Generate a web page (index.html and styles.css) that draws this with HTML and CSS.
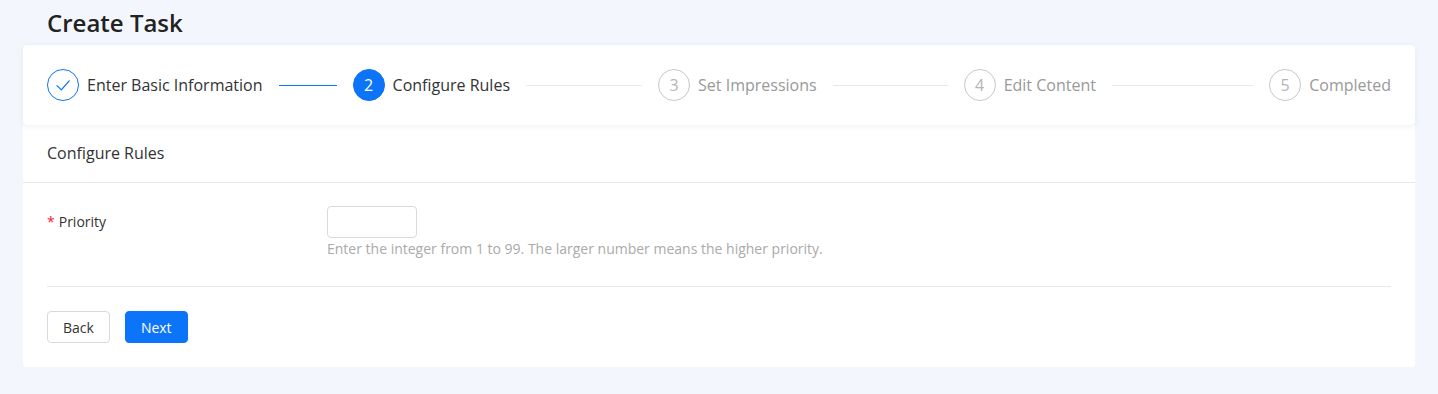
FILE: index.html
```html
<!DOCTYPE html>
<html lang="en">
<head>
    <meta charset="UTF-8">
    <title>Create Task</title>
    <link rel="stylesheet" href="styles.css">
</head>
<body>
<div class="page">
    <h1 class="page-title">Create Task</h1>

    <div class="steps-card">
        <div class="steps">
            <div class="step finish">
                <span class="step-icon">
                    <svg width="18" height="18" viewBox="0 0 18 18"><path d="M3 9.6l4.3 4.3 7.9-9" fill="none" stroke="#0c74f9" stroke-width="1.3" stroke-linecap="round" stroke-linejoin="round"/></svg>
                </span>
                <span class="step-title">Enter Basic Information</span>
            </div>
            <div class="step active">
                <span class="step-icon">2</span>
                <span class="step-title">Configure Rules</span>
            </div>
            <div class="step">
                <span class="step-icon">3</span>
                <span class="step-title">Set Impressions</span>
            </div>
            <div class="step">
                <span class="step-icon">4</span>
                <span class="step-title">Edit Content</span>
            </div>
            <div class="step">
                <span class="step-icon">5</span>
                <span class="step-title">Completed</span>
            </div>
        </div>
    </div>

    <div class="card">
        <div class="card-head">Configure Rules</div>
        <div class="card-body">
            <div class="form-row">
                <label class="form-label"><span class="req">*</span>Priority</label>
                <div class="form-control">
                    <input class="input" type="text">
                    <div class="help">Enter the integer from 1 to 99. The larger number means the higher priority.</div>
                </div>
            </div>
            <div class="divider"></div>
            <div class="actions">
                <button class="btn">Back</button>
                <button class="btn btn-primary">Next</button>
            </div>
        </div>
    </div>
</div>
</body>
</html>
```

FILE: styles.css
```css
*{
    box-sizing: border-box;
}
body{
    margin: 0;
    background-color: #f3f7fd;
    font-family: "Open Sans", "Noto Sans", sans-serif;
    color: #333;
}
.page{
    padding: 0 23px;
}
.page-title{
    margin: 0;
    padding-left: 24px;
    height: 45px;
    line-height: 45px;
    font-size: 24px;
    font-weight: 600;
    color: #222;
}

/* steps */
.steps-card{
    background: #fff;
    border-radius: 4px;
    box-shadow: 0 1px 6px rgba(40, 70, 120, 0.08);
    height: 80px;
    padding: 0 24px;
    display: flex;
    align-items: center;
    position: relative;
    z-index: 1;
}
.steps{
    display: flex;
    width: 100%;
}
.step{
    flex: 1;
    display: flex;
    align-items: center;
    padding-left: 16px;
    overflow: hidden;
}
.step:first-child{
    padding-left: 0;
}
.step:last-child{
    flex: none;
}
.step-icon{
    flex: none;
    width: 32px;
    height: 32px;
    border-radius: 50%;
    border: 1px solid #c8c8c8;
    color: #b5b5b5;
    font-size: 16px;
    display: flex;
    align-items: center;
    justify-content: center;
    margin-right: 8px;
}
.step-title{
    position: relative;
    display: flex;
    align-items: center;
    flex: 1;
    font-size: 16px;
    line-height: 32px;
    color: #999;
    white-space: nowrap;
}
.step-title::after{
    content: "";
    flex: 1;
    height: 1px;
    margin-left: 16px;
    background: #e8e8e8;
}
.step:last-child .step-title::after{
    display: none;
}
.step.finish .step-icon{
    border-color: #0c74f9;
}
.step.finish .step-title{
    color: #333;
}
.step.finish .step-title::after{
    background: #0c74f9;
}
.step.active .step-icon{
    background: #0c74f9;
    border-color: #0c74f9;
    color: #fff;
}
.step.active .step-title{
    color: #333;
}

/* card */
.card{
    background: #fff;
    border-radius: 0 0 4px 4px;
}
.card-head{
    height: 58px;
    line-height: 57px;
    padding: 0 24px;
    font-size: 16px;
    color: #333;
    border-bottom: 1px solid #e8e8e8;
}
.card-body{
    padding: 23px 24px 24px;
}
.form-row{
    display: flex;
}
.form-label{
    width: 280px;
    flex: none;
    line-height: 32px;
    font-size: 14px;
    color: #333;
}
.req{
    color: #f5222d;
    margin-right: 4px;
    font-size: 14px;
}
.input{
    display: block;
    width: 90px;
    height: 32px;
    border: 1px solid #d9d9d9;
    border-radius: 4px;
    outline: none;
}
.help{
    font-size: 14px;
    line-height: 22px;
    color: #aaa;
}
.divider{
    height: 1px;
    background: #e8e8e8;
    margin: 26px 0 24px;
}
.actions{
    display: flex;
    gap: 15px;
}
.btn{
    height: 32px;
    padding: 0 15px;
    border: 1px solid #d9d9d9;
    border-radius: 4px;
    background: #fff;
    font-family: inherit;
    font-size: 14px;
    color: #333;
}
.btn-primary{
    background: #0c74f9;
    border-color: #0c74f9;
    color: #fff;
}
```
